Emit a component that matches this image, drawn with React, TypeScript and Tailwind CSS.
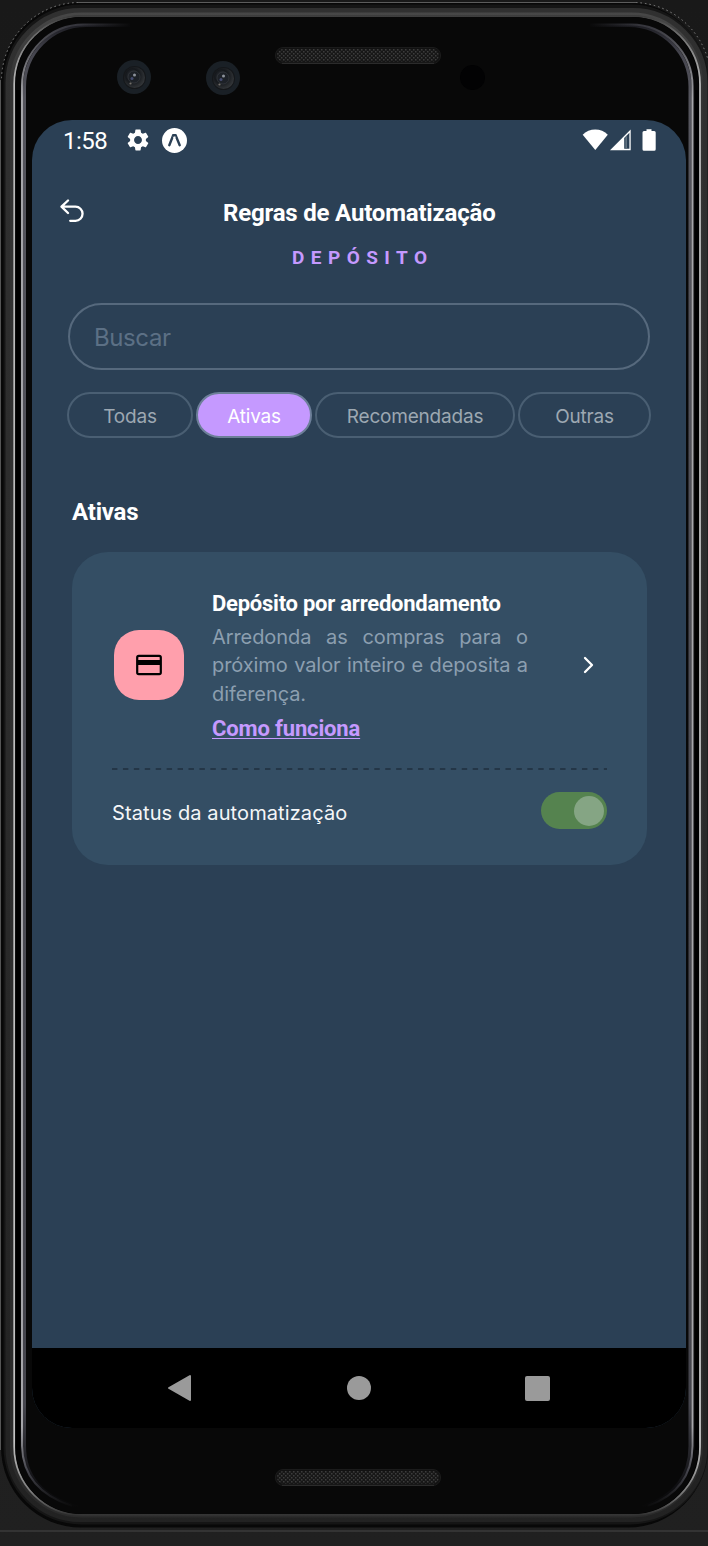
import React from "react";

function Lens({ className }: { className: string }) {
  return (
    <svg viewBox="0 0 34 34" className={`h-[34px] w-[34px] ${className}`} aria-hidden="true">
      <defs>
        <radialGradient id="lens" cx="0.4" cy="0.4" r="0.7">
          <stop offset="0" stopColor="#34383f" />
          <stop offset="0.45" stopColor="#15181c" />
          <stop offset="1" stopColor="#3a3d40" />
        </radialGradient>
      </defs>
      <circle cx="17" cy="17" r="17" fill="#1a2026" />
      <circle cx="17.500" cy="17.500" r="11.500" fill="#15171a" />
      <circle cx="17.500" cy="17.500" r="10.500" fill="url(#lens)" />
      <circle cx="17" cy="17" r="6" fill="#1d2127" stroke="#33373c" strokeWidth="0.800" />
      <circle cx="17.500" cy="15" r="1.500" fill="#8d929b" />
      <circle cx="15" cy="18.500" r="1.500" fill="#454c70" />
      <circle cx="13.500" cy="23.500" r="1.100" fill="#75706c" />
    </svg>
  );
}

function Grille() {
  return (
    <svg viewBox="0 0 166 17" className="h-[17px] w-[166px]" aria-hidden="true">
      <defs>
        <pattern id="mesh" width="4" height="4" patternUnits="userSpaceOnUse">
          <rect width="4" height="4" fill="#171717" />
          <rect width="1.500" height="1.500" fill="#3d3d3d" />
          <rect x="2" y="2" width="1.500" height="1.500" fill="#3d3d3d" />
        </pattern>
      </defs>
      <rect x="0.500" y="0.500" width="165" height="16" rx="7.500" fill="#121212" stroke="#1b1b1b" />
      <rect x="2" y="2" width="162" height="12.500" rx="6" fill="url(#mesh)" />
      <path d="M7 16.300H159" stroke="#303030" strokeWidth="1" />
    </svg>
  );
}

function Bezel() {
  return (
    <svg viewBox="0 0 708 1546" className="absolute inset-0 h-[1546px] w-[708px]" aria-hidden="true">
      <defs>
        <linearGradient id="outer" gradientUnits="userSpaceOnUse" x1="0" y1="16" x2="0" y2="1516">
          <stop offset="0" stopColor="#3c3c3c" />
          <stop offset="0.012" stopColor="#6c6c6c" />
          <stop offset="0.045" stopColor="#b9b9b9" />
          <stop offset="0.950" stopColor="#c4c4c4" />
          <stop offset="0.985" stopColor="#777" />
          <stop offset="1" stopColor="#303030" />
        </linearGradient>
        <linearGradient id="inner" gradientUnits="userSpaceOnUse" x1="0" y1="24" x2="0" y2="1508">
          <stop offset="0" stopColor="#34343b" />
          <stop offset="0.050" stopColor="#a6a6aa" />
          <stop offset="0.945" stopColor="#a6a6aa" />
          <stop offset="0.975" stopColor="#44444c" />
          <stop offset="1" stopColor="#080808" />
        </linearGradient>
        <linearGradient id="shade" gradientUnits="userSpaceOnUse" x1="0" y1="24" x2="0" y2="1508">
          <stop offset="0" stopColor="#1c1c22" />
          <stop offset="0.020" stopColor="#45454e" />
          <stop offset="0.050" stopColor="#55555d" />
          <stop offset="0.930" stopColor="#45454d" />
          <stop offset="0.985" stopColor="#0f0f12" />
          <stop offset="1" stopColor="#080808" />
        </linearGradient>
        <linearGradient id="rim" gradientUnits="userSpaceOnUse" x1="0" y1="2" x2="0" y2="1528">
          <stop offset="0" stopColor="#303030" />
          <stop offset="0.500" stopColor="#2b2b2b" />
          <stop offset="1" stopColor="#222" />
        </linearGradient>
        <linearGradient id="lip" gradientUnits="userSpaceOnUse" x1="0" y1="12" x2="0" y2="1518">
          <stop offset="0" stopColor="#474747" />
          <stop offset="0.050" stopColor="#333" />
          <stop offset="1" stopColor="#2b2b2b" />
        </linearGradient>
        <linearGradient id="fadeLeft">
          <stop offset="0" stopColor="#080808" stopOpacity="0" />
          <stop offset="1" stopColor="#080808" />
        </linearGradient>
        <linearGradient id="fadeRight">
          <stop offset="0" stopColor="#080808" />
          <stop offset="1" stopColor="#080808" stopOpacity="0" />
        </linearGradient>
      </defs>
      <rect y="1530" width="708" height="2" fill="#333" />
      <rect x="1" y="2.500" width="707" height="1525" rx="80" fill="#080808" />
      <path d="M78 2.500H636" stroke="#5c5c5c" strokeWidth="1" />
      <path d="M78 2.500A78 78 0 0 0 1.500 80M636 2.500A78 78 0 0 1 707.500 58" fill="none" stroke="#858585" strokeWidth="1" strokeDasharray="1.500 3" />
      <path d="M0.500 80V1450" stroke="#555" strokeWidth="1" />
      <rect x="6" y="7" width="700" height="1515" rx="75" fill="none" stroke="#151515" strokeWidth="5" />
      <rect x="9.500" y="12" width="694" height="1506" rx="71" fill="none" stroke="url(#rim)" strokeWidth="8" />
      <rect x="11.500" y="14" width="690" height="1502" rx="70" fill="none" stroke="url(#lip)" strokeWidth="3" />
      <rect x="14.200" y="16" width="685.800" height="1499" rx="68" fill="#020202" stroke="url(#outer)" strokeWidth="1.800" />
      <rect x="15.500" y="17" width="683" height="1497" rx="67" fill="#080808" />
      <path d="M18 90V1450M697 90V1450" stroke="#000" strokeWidth="4" />
      <path d="M130 25.500H86A61.500 61.500 0 0 0 24.500 87V1446Q24.500 1492 78 1507M590 25.500H629A61.500 61.500 0 0 1 690 87V1446Q690 1492 642 1507" fill="none" stroke="url(#shade)" strokeWidth="3" />
      <path d="M130 24.500H84A61.500 61.500 0 0 0 22 86V1446Q23 1490 72 1506M590 24.500H631A61.500 61.500 0 0 1 692.500 86V1446Q692 1490 648 1506" fill="none" stroke="url(#inner)" strokeWidth="2" />
      <rect x="80" y="21" width="52" height="8" fill="url(#fadeLeft)" />
      <rect x="588" y="21" width="52" height="8" fill="url(#fadeRight)" />
    </svg>
  );
}

function StatusBar() {
  return (
    <div className="flex h-10 items-center pl-[31px] pr-[29px] text-white">
      <span className="w-[64px] pt-[2px] font-['Roboto',sans-serif] text-[24px] leading-10 tracking-[-0.500px]">1:58</span>
      <svg viewBox="2 2 20 20" className="h-[22px] w-[22px]" fill="currentColor" aria-hidden="true">
        <path d="M19.140 12.940c.04-.3.06-.61.06-.94 0-.32-.02-.64-.07-.94l2.030-1.580c.18-.14.23-.41.12-.61l-1.920-3.320c-.12-.22-.37-.29-.59-.22l-2.390.96c-.5-.38-1.030-.7-1.620-.94l-.36-2.540c-.04-.24-.24-.41-.48-.41h-3.840c-.24 0-.43.17-.47.41l-.36 2.540c-.59.24-1.130.57-1.620.94l-2.390-.96c-.22-.08-.47 0-.59.22L2.740 8.870c-.12.21-.08.47.12.61l2.030 1.580c-.05.3-.09.63-.09.94s.02.64.07.94l-2.030 1.580c-.18.14-.23.41-.12.61l1.920 3.320c.12.22.37.29.59.22l2.390-.96c.5.38 1.030.7 1.620.94l.36 2.540c.05.24.24.41.48.41h3.840c.24 0 .44-.17.47-.41l.36-2.540c.59-.24 1.130-.56 1.620-.94l2.390.96c.22.08.47 0 .59-.22l1.920-3.320c.12-.22.07-.47-.12-.61l-2.010-1.580zM12 15.600c-1.980 0-3.600-1.620-3.600-3.600s1.620-3.600 3.600-3.600 3.600 1.620 3.600 3.600-1.620 3.600-3.600 3.600z" />
      </svg>
      <svg viewBox="0 0 26 26" className="ml-[12px] h-[26px] w-[26px]" aria-hidden="true">
        <circle cx="13.500" cy="13.500" r="12.500" fill="#fff" />
        <path d="M8.300 18.200L12.200 8.300H14.600L18.700 18.200" fill="none" stroke="#2b4055" strokeWidth="2.400" strokeLinecap="round" strokeLinejoin="round" />
        <path d="M11.700 9.200L13.400 12.500L15.100 9.200Z" fill="#fff" />
        <path d="M11.500 7.200H15.300L14.600 10L13.400 9.200L12.200 10Z" fill="#2b4055" />
      </svg>
      <svg viewBox="0 0 75 24" className="ml-auto h-6 w-[75px]" fill="currentColor" aria-hidden="true">
        <path d="M0.700 6.700C7 -0.300 19.500 -0.300 25.800 6.700L13.300 22Z" />
        <path d="M28 22.200L48.700 1.500V22.200Z" />
        <path d="M42.200 9.900L47.400 4.700V20.700H42.200Z" fill="#2b4055" />
        <path d="M43.300 9.500L45 7.800V20.700H43.300Z" fill="#60717f" />
        <path d="M64.500 1.200H69.500V3H72.200Q73.700 3 73.700 4.500V21.300Q73.700 22.800 72.200 22.800H62Q60.500 22.800 60.500 21.300V4.500Q60.500 3 62 3H64.500Z" />
      </svg>
    </div>
  );
}

const filters = [
  { label: "Todas", box: "w-[126px] border-[#4a5f73] text-[#9da8b2]" },
  { label: "Ativas", box: "ml-[3px] w-[116px] border-[#6d7f99] bg-[#c599ff] text-white" },
  { label: "Recomendadas", box: "ml-[3px] w-[200px] border-[#4a5f73] text-[#9da8b2]" },
  { label: "Outras", box: "ml-[3px] w-[133px] border-[#4a5f73] text-[#9da8b2]" },
];

function RuleCard() {
  return (
    <section className="ml-10 mt-[24px] flex h-[313px] w-[575px] flex-col rounded-[36px] bg-[#344e64] px-10">
      <div className="flex h-[216px] items-start">
        <div className="ml-[2px] mt-[78px] flex h-[70px] w-[70px] items-center justify-center rounded-[25px] bg-[#ff9fac]">
          <svg viewBox="0 0 26 22" className="h-[22px] w-[26px]" aria-hidden="true">
            <rect x="1.200" y="1.900" width="23.600" height="18.200" rx="1.600" fill="none" stroke="#000" strokeWidth="2.200" />
            <path d="M1.500 6H24.500V11H1.500Z" />
          </svg>
        </div>
        <div className="ml-7 w-[316px] pt-[37px]">
          <h3 className="whitespace-nowrap font-['Roboto',sans-serif] text-[22px] font-bold leading-[30px] tracking-[-0.240px] text-white">Depósito por arredondamento</h3>
          <p className="mt-[4px] text-justify text-[20px] leading-[28.300px] tracking-[-0.080px] text-[#8c9fb0]">
            Arredonda as compras para o próximo valor inteiro e deposita a diferença.
          </p>
          <a className="mt-[7px] block whitespace-nowrap font-['Roboto',sans-serif] text-[22px] font-bold leading-[28px] tracking-[-0.150px] text-[#c599ff] underline decoration-1 underline-offset-[2px]">Como funciona</a>
        </div>
        <svg viewBox="0 0 12 18" className="ml-[55px] mt-[104px] h-[18px] w-3" fill="none" aria-hidden="true">
          <path d="M2 2L9 9L2 16" stroke="#fff" strokeWidth="2.300" strokeLinecap="round" strokeLinejoin="round" />
        </svg>
      </div>
      <svg viewBox="0 0 495 2" className="h-[2px] w-[495px]" aria-hidden="true">
        <path d="M0 1H495" stroke="#243647" strokeWidth="2" strokeDasharray="5.400 5.530" />
      </svg>
      <div className="mt-[22px] flex h-[37px] items-center justify-between">
        <span className="pt-[4px] text-[20px] tracking-[0.100px] text-[#f4f6f8]">Status da automatização</span>
        <div className="flex h-[37px] w-[66px] items-center justify-end rounded-full bg-[#55834f] pr-[3px]">
          <div className="h-[30px] w-[30px] rounded-full bg-[#85a584]" />
        </div>
      </div>
    </section>
  );
}

export default function App() {
  return (
    <main className="relative h-[1546px] w-[708px] overflow-hidden bg-[linear-gradient(#191919_0%,#202020_100%)] font-['Inter',sans-serif]">
      <Bezel />
      <div className="relative flex h-full flex-col">
        <div className="flex h-[120px] items-start">
          <Lens className="ml-[117px] mt-[60px]" />
          <Lens className="ml-[55px] mt-[61px]" />
          <div className="ml-[35px] mt-[47px]"><Grille /></div>
          <div className="ml-[19px] mt-[65px] h-[25px] w-[25px] rounded-full bg-[#020203]" />
        </div>
        <div className="ml-8 flex h-[1308px] w-[654px] flex-col overflow-hidden rounded-[40px] bg-[#2b4055]">
          <StatusBar />
          <header className="flex h-[76px] items-start pl-7 pt-[39px]">
            <svg viewBox="0 0 24 24" className="h-6 w-6" fill="none" stroke="#fff" strokeWidth="2.300" strokeLinecap="round" strokeLinejoin="round" aria-hidden="true">
              <path d="M8 1.500L1.500 7.700L8 14M2 7.700H15.500A7 7 0 0 1 15.500 21.800H10.200" />
            </svg>
            <h1 className="ml-[139px] whitespace-nowrap font-['Roboto',sans-serif] text-[24px] font-bold leading-7 tracking-[-0.190px] text-white">Regras de Automatização</h1>
          </header>
          <div className="pl-[260px] pt-[10px] font-['Roboto',sans-serif] text-[19px] font-bold leading-6 tracking-[6.450px] text-[#c599ff]">DEPÓSITO</div>
          <div className="ml-9 mt-[33px] flex h-[67px] w-[582px] items-center rounded-full border-2 border-[#56697d] pl-[24px] pt-[2px] text-[24px] tracking-[-0.400px] text-[#5c7085]">Buscar</div>
          <nav className="ml-[35px] mt-[22px] flex">
            {filters.map(({ label, box }) => (
              <button key={label} className={`flex h-[46px] shrink-0 items-center justify-center rounded-full border-2 pt-[4px] text-[19px] tracking-[-0.200px] ${box}`}>{label}</button>
            ))}
          </nav>
          <h2 className="ml-10 mt-[58px] font-['Roboto',sans-serif] text-[24px] font-bold leading-8 tracking-[-0.200px] text-white">Ativas</h2>
          <RuleCard />
          <footer className="mt-auto flex h-20 items-center bg-black">
            <svg viewBox="0 0 24 28" className="ml-[135px] h-7 w-6" aria-hidden="true">
              <path d="M2 14L23 2V26Z" fill="#9a9a9a" stroke="#9a9a9a" strokeWidth="2" strokeLinejoin="round" />
            </svg>
            <div className="ml-[156px] h-6 w-6 rounded-full bg-[#9a9a9a]" />
            <div className="ml-[154px] h-[25px] w-[25px] rounded-[2px] bg-[#9a9a9a]" />
          </footer>
        </div>
        <div className="ml-[275px] mt-[41px]"><Grille /></div>
      </div>
    </main>
  );
}
